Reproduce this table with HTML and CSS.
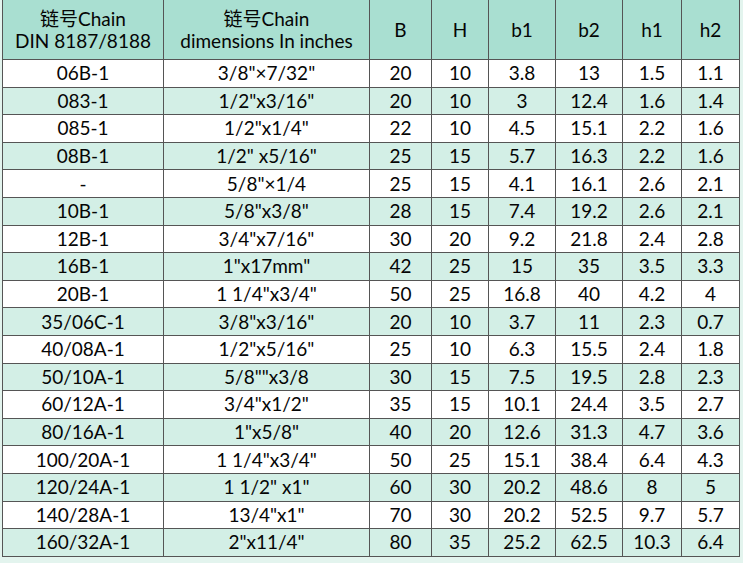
FILE: index.html
```html
<!DOCTYPE html>
<html>
<head>
<meta charset="utf-8">
<link rel="stylesheet" href="styles.css">
</head>
<body>
<div class="wrap">
<table class="spec">
<colgroup>
<col class="c1"><col class="c2"><col class="c3"><col class="c4"><col class="c5"><col class="c6"><col class="c7"><col class="c8">
</colgroup>
<thead>
<tr><th>链号Chain<br>DIN 8187/8188</th><th>链号Chain<br>dimensions In inches</th><th>B</th><th>H</th><th>b1</th><th>b2</th><th>h1</th><th>h2</th></tr>
</thead>
<tbody>
<tr><td>06B-1</td><td>3/8"×7/32"</td><td>20</td><td>10</td><td>3.8</td><td>13</td><td>1.5</td><td>1.1</td></tr>
<tr><td>083-1</td><td>1/2"x3/16"</td><td>20</td><td>10</td><td>3</td><td>12.4</td><td>1.6</td><td>1.4</td></tr>
<tr><td>085-1</td><td>1/2"x1/4"</td><td>22</td><td>10</td><td>4.5</td><td>15.1</td><td>2.2</td><td>1.6</td></tr>
<tr><td>08B-1</td><td>1/2" x5/16"</td><td>25</td><td>15</td><td>5.7</td><td>16.3</td><td>2.2</td><td>1.6</td></tr>
<tr><td>-</td><td>5/8"×1/4</td><td>25</td><td>15</td><td>4.1</td><td>16.1</td><td>2.6</td><td>2.1</td></tr>
<tr><td>10B-1</td><td>5/8"x3/8"</td><td>28</td><td>15</td><td>7.4</td><td>19.2</td><td>2.6</td><td>2.1</td></tr>
<tr><td>12B-1</td><td>3/4"x7/16"</td><td>30</td><td>20</td><td>9.2</td><td>21.8</td><td>2.4</td><td>2.8</td></tr>
<tr><td>16B-1</td><td>1"x17mm"</td><td>42</td><td>25</td><td>15</td><td>35</td><td>3.5</td><td>3.3</td></tr>
<tr><td>20B-1</td><td>1 1/4"x3/4"</td><td>50</td><td>25</td><td>16.8</td><td>40</td><td>4.2</td><td>4</td></tr>
<tr><td>35/06C-1</td><td>3/8"x3/16"</td><td>20</td><td>10</td><td>3.7</td><td>11</td><td>2.3</td><td>0.7</td></tr>
<tr><td>40/08A-1</td><td>1/2"x5/16"</td><td>25</td><td>10</td><td>6.3</td><td>15.5</td><td>2.4</td><td>1.8</td></tr>
<tr><td>50/10A-1</td><td>5/8""x3/8</td><td>30</td><td>15</td><td>7.5</td><td>19.5</td><td>2.8</td><td>2.3</td></tr>
<tr><td>60/12A-1</td><td>3/4"x1/2"</td><td>35</td><td>15</td><td>10.1</td><td>24.4</td><td>3.5</td><td>2.7</td></tr>
<tr><td>80/16A-1</td><td>1"x5/8"</td><td>40</td><td>20</td><td>12.6</td><td>31.3</td><td>4.7</td><td>3.6</td></tr>
<tr><td>100/20A-1</td><td>1 1/4"x3/4"</td><td>50</td><td>25</td><td>15.1</td><td>38.4</td><td>6.4</td><td>4.3</td></tr>
<tr><td>120/24A-1</td><td>1 1/2" x1"</td><td>60</td><td>30</td><td>20.2</td><td>48.6</td><td>8</td><td>5</td></tr>
<tr><td>140/28A-1</td><td>13/4"x1"</td><td>70</td><td>30</td><td>20.2</td><td>52.5</td><td>9.7</td><td>5.7</td></tr>
<tr><td>160/32A-1</td><td>2"x11/4"</td><td>80</td><td>35</td><td>25.2</td><td>62.5</td><td>10.3</td><td>6.4</td></tr>
</tbody>
</table>
</div>
</body>
</html>
```
FILE: styles.css
```css
html, body {
  margin: 0;
  padding: 0;
  background: #e3f4ee;
}
.wrap {
  padding: 0 3px 0 2px;
  width: 738px;
}
.spec {
  border-collapse: collapse;
  table-layout: fixed;
  width: 738px;
  font-family: Lato, "Noto Sans CJK SC", sans-serif;
  font-size: 19px;
  color: #050505;
  background: #fff;
}
.c1 { width: 161px; }
.c2 { width: 206px; }
.c3 { width: 62px; }
.c4 { width: 57px; }
.c5 { width: 67px; }
.c6 { width: 67px; }
.c7 { width: 59px; }
.c8 { width: 58px; }
.spec th, .spec td {
  border: 1px solid #555;
  text-align: center;
  padding: 0;
  overflow: hidden;
  white-space: nowrap;
}
.spec th {
  background: #a9dfd1;
  font-weight: normal;
  height: 59px;
  line-height: 22px;
  border-top: none;
}
.spec td {
  height: 26.6px;
  line-height: 26px;
}
.spec tbody tr:nth-child(even) td {
  background: #d3efe6;
}
```
